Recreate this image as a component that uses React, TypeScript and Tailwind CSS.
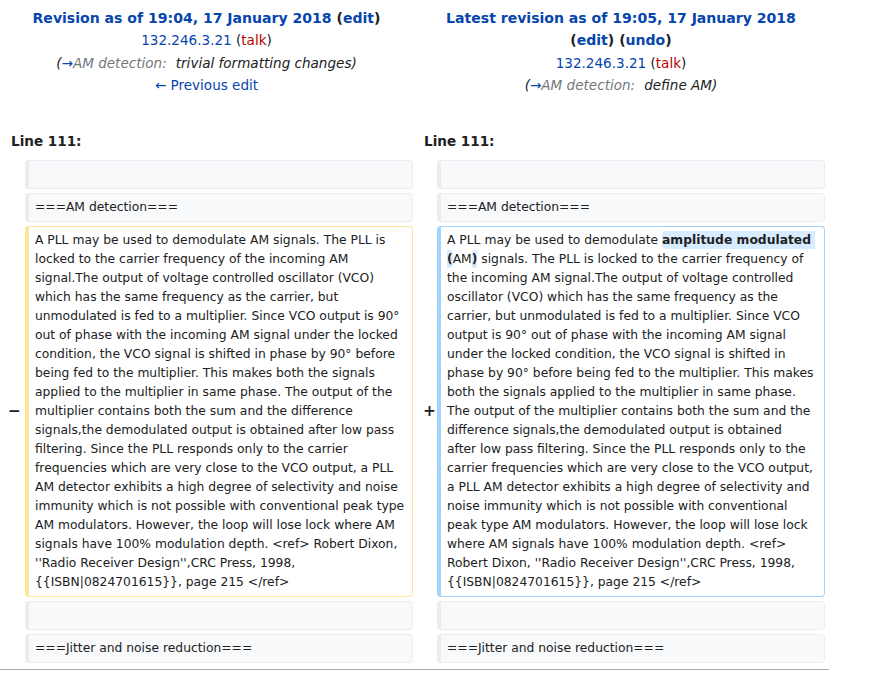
const oldText =
  "A PLL may be used to demodulate AM signals. The PLL is locked to the carrier frequency of the incoming AM signal.The output of voltage controlled oscillator (VCO) which has the same frequency as the carrier, but unmodulated is fed to a multiplier. Since VCO output is 90° out of phase with the incoming AM signal under the locked condition, the VCO signal is shifted in phase by 90° before being fed to the multiplier. This makes both the signals applied to the multiplier in same phase. The output of the multiplier contains both the sum and the difference signals,the demodulated output is obtained after low pass filtering. Since the PLL responds only to the carrier frequencies which are very close to the VCO output, a PLL AM detector exhibits a high degree of selectivity and noise immunity which is not possible with conventional peak type AM modulators. However, the loop will lose lock where AM signals have 100% modulation depth. <ref> Robert Dixon, ''Radio Receiver Design'',CRC Press, 1998, {{ISBN|0824701615}}, page 215 </ref>"

// the line break before "after" follows where the reference wraps
const newTail =
  " signals. The PLL is locked to the carrier frequency of the incoming AM signal.The output of voltage controlled oscillator (VCO) which has the same frequency as the carrier, but unmodulated is fed to a multiplier. Since VCO output is 90° out of phase with the incoming AM signal under the locked condition, the VCO signal is shifted in phase by 90° before being fed to the multiplier. This makes both the signals applied to the multiplier in same phase. The output of the multiplier contains both the sum and the difference signals,the demodulated output is obtained\nafter low pass filtering. Since the PLL responds only to the carrier frequencies which are very close to the VCO output, a PLL AM detector exhibits a high degree of selectivity and noise immunity which is not possible with conventional peak type AM modulators. However, the loop will lose lock where AM signals have 100% modulation depth. <ref> Robert Dixon, ''Radio Receiver Design'',CRC Press, 1998, {{ISBN|0824701615}}, page 215 </ref>"

const Blue = ({ children }: { children: React.ReactNode }) => (
  <span className="text-[#0645ad]">{children}</span>
)

const Ins = ({ children }: { children: React.ReactNode }) => (
  <span className="font-bold bg-[#d8ecff] rounded-[4px] py-[2px]">{children}</span>
)

function Context({ text }: { text?: string }) {
  return (
    <div className="h-[29px] rounded-[4px] border border-[#eaecf0] border-l-4 bg-[#f8f9fa] px-[6px] py-[4px] whitespace-pre-wrap">
      {text}
    </div>
  )
}

function Marker({ sign, pad }: { sign?: string; pad: string }) {
  return (
    <div className={`flex items-center justify-end text-[15.4px] font-bold ${pad}`}>{sign}</div>
  )
}

export default function App() {
  return (
    <div className="w-[829px] font-['DejaVu_Sans',sans-serif] text-[#202122]">
      <div className="grid grid-cols-[413px_416px] pt-[7px] text-[13.55px] leading-[22.4px] text-center">
        <div>
          <div className="font-bold text-[14.05px]">
            <Blue>Revision as of 19:04, 17 January 2018</Blue> (<Blue>edit</Blue>)
          </div>
          <div>
            <Blue>132.246.3.21</Blue> (<span className="text-[#ba0000]">talk</span>)
          </div>
          <div className="italic">
            (<Blue>→</Blue><span className="text-[#72777d]">AM detection:</span>
            <span className="ml-[9px]">trivial formatting changes)</span>
          </div>
          <div>
            <Blue>← Previous edit</Blue>
          </div>
        </div>
        <div>
          <div className="font-bold text-[14.05px]">
            <Blue>Latest revision as of 19:05, 17 January 2018</Blue>
          </div>
          <div className="font-bold text-[14.05px]">
            (<Blue>edit</Blue>) (<Blue>undo</Blue>)
          </div>
          <div>
            <Blue>132.246.3.21</Blue> (<span className="text-[#ba0000]">talk</span>)
          </div>
          <div className="italic">
            (<Blue>→</Blue><span className="text-[#72777d]">AM detection:</span>
            <span className="ml-[9px]">define AM)</span>
          </div>
        </div>
      </div>

      <div className="grid grid-cols-[413px_416px] mt-[33px] text-[13.55px] leading-[22px] font-bold">
        <div className="pl-[11px]">Line 111:</div>
        <div className="pl-[11px]">Line 111:</div>
      </div>

      <div className="mt-[8px] grid grid-cols-[25px_388px_24px_388px] gap-y-[4px] text-[12.32px] leading-[19px]">
        <div />
        <Context />
        <div />
        <Context />

        <div />
        <Context text="===AM detection===" />
        <div />
        <Context text="===AM detection===" />

        <Marker sign="−" pad="pr-[4px]" />
        <div className="rounded-[4px] border border-[#ffe49c] border-l-4 bg-white px-[6px] py-[4px] whitespace-pre-wrap break-words">
          {oldText}
        </div>
        <Marker sign="+" pad="pr-[1px]" />
        <div className="rounded-[4px] border border-[#a3d3ff] border-l-4 bg-white px-[6px] py-[4px] whitespace-pre-wrap break-words">
          A PLL may be used to demodulate <Ins>amplitude modulated (</Ins>AM<Ins>)</Ins>
          {newTail}
        </div>

        <div />
        <Context />
        <div />
        <Context />

        <div />
        <Context text="===Jitter and noise reduction===" />
        <div />
        <Context text="===Jitter and noise reduction===" />
      </div>

      <div className="mt-[6px] border-t border-[#a2a9b1]" />
    </div>
  )
}
